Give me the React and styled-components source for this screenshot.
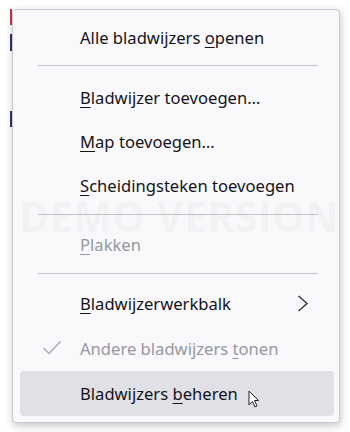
import React from "react";
import styled, { createGlobalStyle } from "styled-components";

const GlobalStyle = createGlobalStyle`
  html, body {
    margin: 0;
    padding: 0;
    background: #ffffff;
  }
  body {
    font-family: "Noto Sans", "Open Sans", sans-serif;
  }
`;

const Page = styled.div`
  width: 350px;
  height: 432px;
  display: flex;
  align-items: flex-start;
  position: relative;
  overflow: hidden;
`;

const PageEdge = styled.div`
  width: 2px;
  margin-left: 10px;
  margin-top: 9px;
  display: flex;
  flex-direction: column;
`;

const EdgeMark = styled.div`
  height: ${(p) => p.$h}px;
  margin-bottom: ${(p) => p.$gap}px;
  background: ${(p) => p.$color};
`;

const Panel = styled.div`
  position: relative;
  width: 328px;
  margin-top: 9px;
  box-sizing: border-box;
  background: #f9f9fb;
  border: 1px solid #c9c9cf;
  border-radius: 4px;
  box-shadow: 1px 3px 8px rgba(0, 0, 0, 0.22);
  padding: 5px 5px 6px 7px;
  display: flex;
  flex-direction: column;
  overflow: hidden;
`;

const Watermark = styled.div`
  position: absolute;
  left: 6px;
  top: 191px;
  font-family: "Open Sans", sans-serif;
  font-weight: 700;
  font-size: 41px;
  line-height: 0.75;
  letter-spacing: 0.5px;
  color: rgba(40, 40, 60, 0.05);
  white-space: nowrap;
  pointer-events: none;
`;

const Item = styled.div`
  position: relative;
  height: ${(p) => p.$h || 44}px;
  display: flex;
  align-items: center;
  padding-left: 60px;
  padding-right: 25px;
  border-radius: 4px;
  font-size: 16.6px;
  color: ${(p) => (p.$disabled ? "#9797a0" : "#15141a")};
  background: ${(p) => (p.$active ? "#e0e0e6" : "transparent")};
`;

const Label = styled.span`
  flex: 1;
  white-space: nowrap;
`;

const Key = styled.span`
  text-decoration: underline;
  text-underline-offset: 3px;
  text-decoration-thickness: 1px;
`;

const Separator = styled.div`
  height: 1px;
  background: #c3c3c8;
  margin: ${(p) => p.$top}px 16px ${(p) => p.$bottom}px 18px;
`;

const CheckMark = styled.svg`
  position: absolute;
  left: 22px;
  top: 14px;
`;

const Chevron = styled.svg`
  flex-shrink: 0;
`;

const Cursor = styled.svg`
  position: absolute;
  left: 228px;
  top: 19px;
`;

const App = () => {
  return (
    <>
      <GlobalStyle />
      <Page>
        <PageEdge>
          <EdgeMark $h={16} $gap={9} $color="#c0394a" />
          <EdgeMark $h={17} $gap={60} $color="#2c3570" />
          <EdgeMark $h={16} $gap={0} $color="#2c3570" />
        </PageEdge>
        <Panel>
          <Watermark>DEMO VERSION</Watermark>
          <Item>
            <Label>
              Alle bladwijzers <Key>o</Key>penen
            </Label>
          </Item>
          <Separator $top={6} $bottom={9} />
          <Item>
            <Label>
              <Key>B</Key>ladwijzer toevoegen…
            </Label>
          </Item>
          <Item>
            <Label>
              <Key>M</Key>ap toevoegen…
            </Label>
          </Item>
          <Item>
            <Label>
              <Key>S</Key>cheidingsteken toevoegen
            </Label>
          </Item>
          <Separator $top={7} $bottom={7} />
          <Item $disabled>
            <Label>
              <Key>P</Key>lakken
            </Label>
          </Item>
          <Separator $top={7} $bottom={7} />
          <Item $h={45}>
            <Label>
              <Key>B</Key>ladwijzerwerkbalk
            </Label>
            <Chevron width="12" height="17" viewBox="0 0 12 17">
              <path d="M1.5 1 L10 8.5 L1.5 16" fill="none" stroke="#3a3a40" strokeWidth="1.5" />
            </Chevron>
          </Item>
          <Item $h={45} $disabled>
            <CheckMark width="20" height="15" viewBox="0 0 20 15">
              <path d="M1.5 8 L7 13.5 L18.5 1.5" fill="none" stroke="#a8a8b0" strokeWidth="1.4" />
            </CheckMark>
            <Label>
              Andere bladwijzers <Key>t</Key>onen
            </Label>
          </Item>
          <Item $h={45} $active>
            <Label>
              Bladwijzers <Key>b</Key>eheren
            </Label>
            <Cursor width="11" height="18" viewBox="0 0 11 18">
              <path d="M1 1 L1 15 L4.5 11.5 L7 17 L9 16 L6.5 10.5 L10.5 10.5 Z" fill="#ffffff" stroke="#222222" strokeWidth="1" />
            </Cursor>
          </Item>
        </Panel>
      </Page>
    </>
  );
};

export default App;
